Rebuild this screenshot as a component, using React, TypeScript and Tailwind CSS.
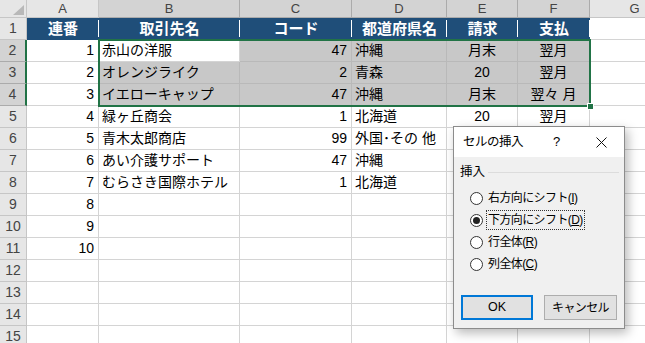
import React from "react";

const FONT = { fontFamily: '"Liberation Sans", "Noto Sans CJK JP", sans-serif' };

// 列幅（右罫線込み）
const cols = [
  { key: "A", w: "w-[72px]", align: "justify-end pr-[4px]" },
  { key: "B", w: "w-[141px]", align: "justify-start pl-[3px]" },
  { key: "C", w: "w-[112px]", align: "justify-end pr-[4px]" },
  { key: "D", w: "w-[95px]", align: "justify-start pl-[3px]" },
  { key: "E", w: "w-[71px]", align: "justify-center" },
  { key: "F", w: "w-[72px]", align: "justify-center" },
  { key: "G", w: "w-[90px]", align: "justify-start" },
];

const head = ["連番", "取引先名", "コード", "都道府県名", "請求", "支払", ""];

const data = [
  ["1", "赤山の洋服", "47", "沖縄", "月末", "翌月", ""],
  ["2", "オレンジライク", "2", "青森", "20", "翌月", ""],
  ["3", "イエローキャップ", "47", "沖縄", "月末", "翌々 月", ""],
  ["4", "緑ヶ丘商会", "1", "北海道", "20", "翌月", ""],
  ["5", "青木太郎商店", "99", "外国･その 他", "", "", ""],
  ["6", "あい介護サポート", "47", "沖縄", "", "", ""],
  ["7", "むらさき国際ホテル", "1", "北海道", "", "", ""],
  ["8", "", "", "", "", "", ""],
  ["9", "", "", "", "", "", ""],
  ["10", "", "", "", "", "", ""],
  ["", "", "", "", "", "", ""],
  ["", "", "", "", "", "", ""],
  ["", "", "", "", "", "", ""],
  ["", "", "", "", "", "", ""],
];

function Radio({ checked, label, hot, focus }: { checked?: boolean; label: string; hot: string; focus?: boolean }) {
  return (
    <div className="flex h-[22px] items-center pl-[16px]">
      <span className="flex h-[13px] w-[13px] items-center justify-center rounded-full border border-[#333] bg-white">
        {checked && <span className="h-[7px] w-[7px] rounded-full bg-[#222]" />}
      </span>
      <span
        className={`ml-[3px] px-[1px] text-[12px] leading-[18px] tracking-[-0.6px] text-black ${
          focus ? "border border-dotted border-[#333]" : "border border-transparent"
        }`}
      >
        {label}(<span className="underline">{hot}</span>)
      </span>
    </div>
  );
}

export default function App() {
  return (
    <div className="relative h-[343px] w-[645px] overflow-hidden bg-white" style={FONT}>
      {/* 列見出し */}
      <div className="flex h-[18px]">
        <div className="relative w-[27px] shrink-0 border-r border-b border-[#c6c6c6] bg-[#e6e6e6]">
          <svg className="absolute right-[2px] bottom-[2px]" width="11" height="10" viewBox="0 0 11 10">
            <polygon points="11,0 11,10 0,10" fill="#b8b8b8" />
          </svg>
        </div>
        {cols.map((c, i) => {
          const sel = i >= 1 && i <= 5;
          return (
            <div
              key={c.key}
              className={`${c.w} flex shrink-0 items-center justify-center border-r border-b text-[13px] text-[#444] ${
                sel ? "border-[#ababab] bg-[#d3d3d3]" : "border-[#c6c6c6] bg-[#e6e6e6]"
              }`}
            >
              {c.key}
            </div>
          );
        })}
      </div>

      {/* 1行目 見出し */}
      <div className="flex h-[22px]">
        <div className="flex w-[27px] shrink-0 items-center justify-center border-r border-b border-[#c6c6c6] bg-[#e6e6e6] text-[14px] text-[#444]">
          1
        </div>
        {cols.map((c, i) =>
          i < 6 ? (
            <div
              key={c.key}
              className={`${c.w} relative flex shrink-0 items-center justify-center bg-[#1f4e79] text-[15px] font-bold text-white`}
            >
              {head[i]}
              <span className="absolute top-[2px] right-0 bottom-[3px] w-px bg-white" />
            </div>
          ) : (
            <div key={c.key} className={`${c.w} shrink-0 border-r border-b border-[#d4d4d4]`} />
          )
        )}
      </div>

      {/* データ行 */}
      {data.map((r, ri) => {
        const rowNo = ri + 2;
        const rowSel = rowNo >= 2 && rowNo <= 4;
        return (
          <div key={ri} className="flex h-[22px]">
            <div
              className={`flex w-[27px] shrink-0 items-center justify-center border-b text-[14px] text-[#444] ${
                rowSel
                  ? "border-r-2 border-r-[#217346] border-b-[#ababab] bg-[#d3d3d3]"
                  : "border-r border-[#c6c6c6] bg-[#e6e6e6]"
              }`}
            >
              {rowNo}
            </div>
            {cols.map((c, ci) => {
              const inSel = rowSel && ci >= 1 && ci <= 5;
              const active = rowNo === 2 && ci === 1;
              const bg = inSel && !active ? "bg-[#c8c8c8] border-[#b9b9b9]" : "bg-white border-[#d4d4d4]";
              return (
                <div
                  key={c.key}
                  className={`${c.w} ${c.align} ${bg} flex shrink-0 items-center overflow-visible border-r border-b text-[14px] whitespace-nowrap text-black`}
                >
                  {r[ci]}
                </div>
              );
            })}
          </div>
        );
      })}

      {/* 選択範囲の枠 */}
      <div className="pointer-events-none absolute top-[39px] left-[98px] h-[68px] w-[493px] border-2 border-[#217346]" />
      <div className="absolute top-[103px] left-[587px] h-[7px] w-[7px] border border-white bg-[#217346]" />

      {/* セルの挿入 ダイアログ */}
      <div className="absolute top-[126px] left-[453px] flex h-[203px] w-[172px] flex-col border border-[#8c8c8c] bg-[#f0f0f0] shadow-[3px_4px_10px_rgba(0,0,0,0.28)]">
        <div className="flex h-[30px] items-center bg-white pl-[9px] text-[12.5px] text-black">
          <span className="tracking-[-0.5px]">セルの挿入</span>
          <span className="ml-[30px] text-[13px]">?</span>
          <svg className="mr-[17px] ml-auto" width="11" height="11" viewBox="0 0 11 11">
            <path d="M0.5 0.5 L10.5 10.5 M10.5 0.5 L0.5 10.5" stroke="#111" strokeWidth="1" />
          </svg>
        </div>
        <div className="flex h-[30px] items-center pr-[5px] pl-[6px]">
          <span className="text-[12.5px] text-black">挿入</span>
          <div className="ml-[3px] h-px flex-1 bg-[#dcdcdc]" />
        </div>
        <Radio label="右方向にシフト" hot="I" />
        <Radio label="下方向にシフト" hot="D" checked focus />
        <Radio label="行全体" hot="R" />
        <Radio label="列全体" hot="C" />
        <div className="mt-[20px] flex gap-[11px] pl-[7px]">
          <button className="flex h-[25px] w-[72px] items-center justify-center border-2 border-[#0078d7] bg-[#e1e1e1] text-[12.5px] text-black">
            OK
          </button>
          <button className="flex h-[25px] w-[73px] items-center justify-center border border-[#adadad] bg-[#e1e1e1] text-[12px] tracking-[-0.6px] text-black">
            キャンセル
          </button>
        </div>
      </div>
    </div>
  );
}
